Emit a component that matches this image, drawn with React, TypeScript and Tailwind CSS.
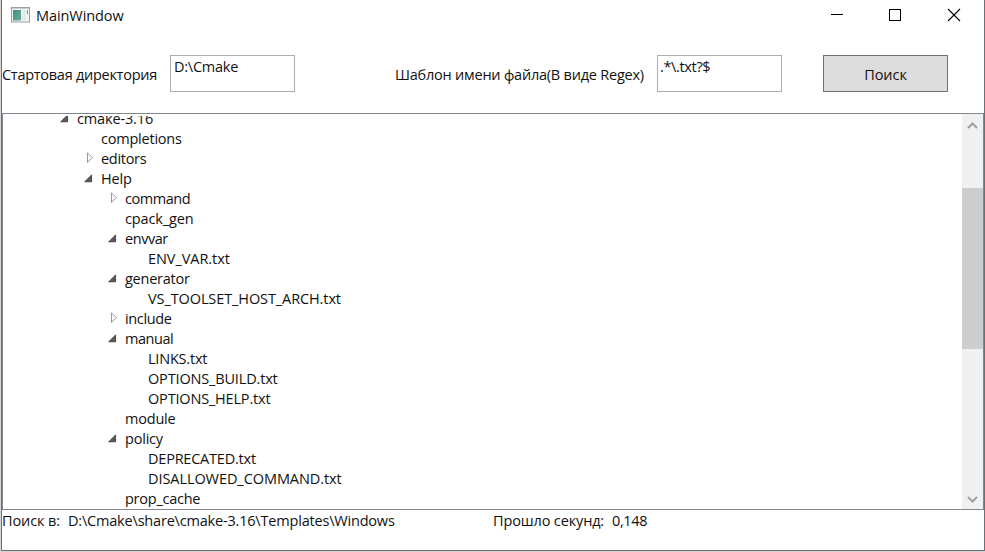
type Row = { label: string; level: number; state?: 'open' | 'closed'; tracking: string };

const indents = ['pl-[54px]', 'pl-[78px]', 'pl-[102px]', 'pl-[125px]'];

const rows: Row[] = [
  { label: 'cmake-3.16', level: 0, state: 'open', tracking: 'tracking-[-0.15px]' },
  { label: 'completions', level: 1, tracking: 'tracking-[-0.22px]' },
  { label: 'editors', level: 1, state: 'closed', tracking: 'tracking-[-0.3px]' },
  { label: 'Help', level: 1, state: 'open', tracking: 'tracking-[-0.2px]' },
  { label: 'command', level: 2, state: 'closed', tracking: 'tracking-[-0.45px]' },
  { label: 'cpack_gen', level: 2, tracking: 'tracking-[-0.13px]' },
  { label: 'envvar', level: 2, state: 'open', tracking: 'tracking-[-0.45px]' },
  { label: 'ENV_VAR.txt', level: 3, tracking: 'tracking-[-0.06px]' },
  { label: 'generator', level: 2, state: 'open', tracking: 'tracking-[-0.25px]' },
  { label: 'VS_TOOLSET_HOST_ARCH.txt', level: 3, tracking: 'tracking-[-0.1px]' },
  { label: 'include', level: 2, state: 'closed', tracking: 'tracking-[-0.35px]' },
  { label: 'manual', level: 2, state: 'open', tracking: 'tracking-[-0.45px]' },
  { label: 'LINKS.txt', level: 3, tracking: 'tracking-[-0.2px]' },
  { label: 'OPTIONS_BUILD.txt', level: 3, tracking: 'tracking-[-0.16px]' },
  { label: 'OPTIONS_HELP.txt', level: 3, tracking: 'tracking-[-0.18px]' },
  { label: 'module', level: 2, tracking: 'tracking-[-0.2px]' },
  { label: 'policy', level: 2, state: 'open', tracking: 'tracking-[-0.2px]' },
  { label: 'DEPRECATED.txt', level: 3, tracking: 'tracking-[-0.22px]' },
  { label: 'DISALLOWED_COMMAND.txt', level: 3, tracking: 'tracking-[-0.07px]' },
  { label: 'prop_cache', level: 2, tracking: 'tracking-[-0.25px]' },
];

function Expander({ state }: { state?: 'open' | 'closed' }) {
  return (
    <svg width="20" height="20" className="shrink-0">
      {state === 'open' && <path d="M10.6 5.9V12.8H3.7Z" fill="#595959" stroke="#333" strokeWidth="0.8" />}
      {state === 'closed' && <path d="M6.5 3.8V13.6L11.4 8.7Z" fill="#fff" stroke="#979797" />}
    </svg>
  );
}

function AppIcon() {
  return (
    <svg width="19" height="16" viewBox="0 0 19 16">
      <defs>
        <linearGradient id="pane" x1="0" y1="0" x2="1" y2="1">
          <stop offset="0" stopColor="#3f8f86" />
          <stop offset="1" stopColor="#6cab9c" />
        </linearGradient>
      </defs>
      <rect x="0.5" y="0.5" width="18" height="14.5" fill="#f2f5f4" stroke="#9a9fa4" />
      <path d="M1 1.5H18" stroke="#c9cdd2" />
      <rect x="2" y="3" width="8" height="10.5" fill="url(#pane)" />
      <rect x="11" y="3" width="4" height="10.5" fill="#e2e9ec" />
      <path d="M16.5 3V7" stroke="#5fa392" />
    </svg>
  );
}

export default function App() {
  return (
    <div className="flex h-[552px] w-[985px] flex-col overflow-hidden bg-[#d6d6d6] pl-px font-['Open_Sans','Noto_Sans',sans-serif] text-[14.5px] leading-5 tracking-[-0.35px] whitespace-pre text-[#111]">
      <div className="flex h-[551px] flex-col border-r border-b border-l border-[#6d7073] bg-white">
        <header className="flex h-8 shrink-0 items-start pl-[9px]">
          <div className="pt-[7px]"><AppIcon /></div>
          <h1 className="pt-[6px] pl-[6px] tracking-[-0.08px]">MainWindow</h1>
          <svg width="140" height="32" className="mr-[17px] ml-auto" fill="none" stroke="#000" shapeRendering="crispEdges">
            <path d="M4 14.5H16" />
            <rect x="62.5" y="9.5" width="11" height="11" />
            <path d="M121 9L133 21M133 9L121 21" shapeRendering="auto" strokeWidth="1.1" />
          </svg>
        </header>
        <section className="flex h-[81px] shrink-0 pt-[23px]">
          <label className="w-[168px] pt-[10px] tracking-[-0.27px]">Стартовая директория</label>
          <div className="h-[37px] w-[125px] border border-[#abadb3] pt-[1px] pl-[3px] tracking-[-0.25px]">D:\Cmake</div>
          <label className="ml-[100px] w-[262px] pt-[10px] tracking-[-0.22px]">Шаблон имени файла(В виде Regex)</label>
          <div className="h-[37px] w-[125px] border border-[#abadb3] pt-[1px] pl-[2px]">.*\.txt?$</div>
          <button className="ml-[41px] h-[37px] w-[125px] border border-[#707070] bg-[#ddd] pt-[2px] tracking-[-0.05px]">Поиск</button>
        </section>
        <main className="flex h-[397px] shrink-0 border border-[#828790] py-[2px]">
          <div className="flex-1 overflow-hidden">
            <div className="-mt-[7px]">
              {rows.map((row) => (
                <div key={row.label} className={`flex h-5 ${indents[row.level]}`}>
                  <Expander state={row.state} />
                  <span className={row.tracking}>{row.label}</span>
                </div>
              ))}
            </div>
          </div>
          <div className="-my-[2px] flex w-[21px] flex-col bg-[#f0f0f0]">
            <svg width="21" height="21" fill="none" stroke="#a0a0a0" strokeWidth="2"><path d="M6 14L10.5 9.5L15 14" /></svg>
            <div className="mt-[53px] h-[161px] bg-[#cdcdcd]" />
            <svg width="21" height="21" className="mt-auto" fill="none" stroke="#a0a0a0" strokeWidth="2"><path d="M6 9L10.5 13.5L15 9" /></svg>
          </div>
        </main>
        <footer className="flex pt-[1px]">
          <span className="w-[66px] tracking-[-0.1px]">Поиск в:</span>
          <span className="w-[425px] tracking-[-0.19px]">D:\Cmake\share\cmake-3.16\Templates\Windows</span>
          <span className="w-[119px] tracking-[-0.14px]">Прошло секунд:</span>
          <span>0,148</span>
        </footer>
      </div>
    </div>
  );
}
